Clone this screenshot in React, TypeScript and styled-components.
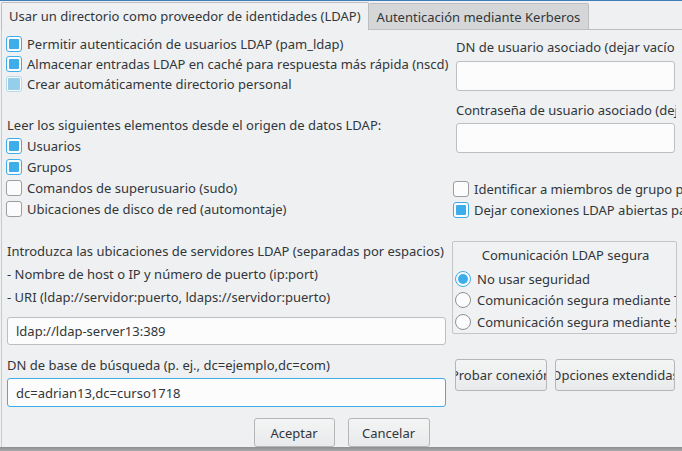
import React from "react";
import styled, { createGlobalStyle } from "styled-components";

const Global = createGlobalStyle`
  html, body { margin: 0; padding: 0; background: #eff0f1; }
  body { font-family: "Noto Sans", "DejaVu Sans", sans-serif; font-size: 13px; color: #31363b; }
  * { box-sizing: border-box; }
`;

const Window = styled.div`
  width: 682px;
  height: 451px;
  overflow: hidden;
  display: flex;
  flex-direction: column;
  background: #eff0f1;
  border-top: 1px solid #3f7fb8;
`;

const TabBar = styled.div`
  height: 29px;
  display: flex;
  align-items: flex-end;
  padding-left: 1px;
  flex-shrink: 0;
`;

const Tab = styled.div<{ $active?: boolean }>`
  height: ${(p) => (p.$active ? 28 : 27)}px;
  padding: 0 ${(p) => (p.$active ? 7 : 8)}px;
  display: flex;
  align-items: center;
  white-space: nowrap;
  border: 1px solid #bcbebf;
  border-bottom: ${(p) => (p.$active ? "none" : "1px solid #bcbebf")};
  border-left: ${(p) => (p.$active ? "1px solid #bcbebf" : "none")};
  border-radius: 2px 2px 0 0;
  background: ${(p) => (p.$active ? "#eff0f1" : "#d5d6d7")};
  padding-bottom: ${(p) => (p.$active ? 2 : 0)}px;
`;

const TabFill = styled.div`
  flex: 1;
  height: 1px;
  background: #bcbebf;
`;

const Pane = styled.div`
  flex: 1;
  display: flex;
  flex-direction: column;
  margin-left: 1px;
  border-left: 1px solid #c8cacb;
  padding-left: 4px;
  min-height: 0;
`;

const Section = styled.div<{ $h: number }>`
  display: grid;
  grid-template-columns: 440px 230px;
  column-gap: 6px;
  height: ${(p) => p.$h}px;
  align-items: start;
`;

const Column = styled.div<{ $top: number }>`
  display: flex;
  flex-direction: column;
  padding-top: ${(p) => p.$top}px;
  min-width: 0;
`;

const Label = styled.div<{ $mt?: number; $pl?: number; $w?: number }>`
  height: 20px;
  line-height: 20px;
  white-space: nowrap;
  overflow: ${(p) => (p.$w ? "hidden" : "visible")};
  width: ${(p) => (p.$w ? `${p.$w}px` : "auto")};
  margin-top: ${(p) => p.$mt ?? 0}px;
  padding-left: ${(p) => p.$pl ?? 1}px;
`;

const CheckRow = styled.div<{ $h: number; $mt?: number; $pl?: number }>`
  height: ${(p) => p.$h}px;
  display: flex;
  align-items: center;
  gap: 5px;
  white-space: nowrap;
  margin-top: ${(p) => p.$mt ?? 0}px;
  padding-left: ${(p) => p.$pl ?? 0}px;
`;

type CheckState = "on" | "off" | "soft";

const Box = styled.span<{ $state: CheckState }>`
  width: 16px;
  height: 16px;
  flex-shrink: 0;
  border-radius: 3px;
  border: 1px solid
    ${(p) => (p.$state === "on" ? "#3daee9" : p.$state === "soft" ? "#b6d8ea" : "#9b9d9f")};
  background: #fcfcfc;
  display: flex;
  align-items: center;
  justify-content: center;
  &::after {
    content: "";
    display: ${(p) => (p.$state === "off" ? "none" : "block")};
    width: ${(p) => (p.$state === "soft" ? 12 : 10)}px;
    height: ${(p) => (p.$state === "soft" ? 12 : 10)}px;
    border-radius: 1px;
    background: ${(p) => (p.$state === "soft" ? "#93cfea" : "#3daee9")};
  }
`;

const Input = styled.div<{ $h: number; $mt?: number; $ml?: number; $focus?: boolean; $w: number }>`
  height: ${(p) => p.$h}px;
  width: ${(p) => p.$w}px;
  margin-top: ${(p) => p.$mt ?? 0}px;
  margin-left: ${(p) => p.$ml ?? 0}px;
  border: 1px solid ${(p) => (p.$focus ? "#3daee9" : "#bdbfc0")};
  border-radius: 3px;
  background: #fcfcfc;
  display: flex;
  align-items: center;
  padding-left: 8px;
  white-space: nowrap;
`;

const GroupBox = styled.div`
  margin-top: 21px;
  width: 225px;
  height: 93px;
  border: 1px solid #c3c5c6;
  border-radius: 2px;
  background: #f0f1f2;
  overflow: hidden;
  display: flex;
  flex-direction: column;
  padding-left: 2px;
`;

const GroupTitle = styled.div`
  height: 26px;
  display: flex;
  align-items: center;
  justify-content: center;
  padding-top: 1px;
  white-space: nowrap;
`;

const RadioRow = styled.div`
  height: 22px;
  display: flex;
  align-items: center;
  gap: 6px;
  white-space: nowrap;
`;

const Radio = styled.span<{ $on?: boolean }>`
  width: 16px;
  height: 16px;
  flex-shrink: 0;
  border-radius: 50%;
  border: 1px solid ${(p) => (p.$on ? "#3daee9" : "#8f9193")};
  background: #fcfcfc;
  display: flex;
  align-items: center;
  justify-content: center;
  &::after {
    content: "";
    display: ${(p) => (p.$on ? "block" : "none")};
    width: 10px;
    height: 10px;
    border-radius: 50%;
    background: #3daee9;
  }
`;

const ButtonRow = styled.div<{ $mt: number; $pl?: number; $ml?: number; $gap: number; $center?: boolean }>`
  display: flex;
  gap: ${(p) => p.$gap}px;
  margin-top: ${(p) => p.$mt}px;
  margin-left: ${(p) => p.$ml ?? 0}px;
  padding-left: ${(p) => p.$pl ?? 0}px;
  justify-content: ${(p) => (p.$center ? "center" : "flex-start")};
`;

const Button = styled.div<{ $w: number; $h: number }>`
  width: ${(p) => p.$w}px;
  height: ${(p) => p.$h}px;
  flex-shrink: 0;
  border: 1px solid #b4b6b7;
  border-radius: 3px;
  background: linear-gradient(#f3f4f4, #e9eaeb);
  display: flex;
  align-items: center;
  justify-content: center;
  overflow: hidden;
  white-space: nowrap;
`;

const BottomBar = styled.div`
  height: 4px;
  flex-shrink: 0;
  background: linear-gradient(#8d8e8f, #a9aaab);
`;

const Check = ({
  state,
  children,
  h,
  mt,
  pl,
}: {
  state: CheckState;
  children: React.ReactNode;
  h: number;
  mt?: number;
  pl?: number;
}) => (
  <CheckRow $h={h} $mt={mt} $pl={pl}>
    <Box $state={state} />
    <span>{children}</span>
  </CheckRow>
);

export default function App() {
  return (
    <>
      <Global />
      <Window>
        <TabBar>
          <Tab $active>Usar un directorio como proveedor de identidades (LDAP)</Tab>
          <Tab>Autenticación mediante Kerberos</Tab>
          <TabFill />
        </TabBar>
        <Pane>
          <Section $h={190}>
            <Column $top={4}>
              <Check state="on" h={20}>Permitir autenticación de usuarios LDAP (pam_ldap)</Check>
              <Check state="on" h={20}>Almacenar entradas LDAP en caché para respuesta más rápida (nscd)</Check>
              <Check state="soft" h={20}>Crear automáticamente directorio personal</Check>
              <Label $mt={21}>Leer los siguientes elementos desde el origen de datos LDAP:</Label>
              <Check state="on" h={21}>Usuarios</Check>
              <Check state="on" h={21}>Grupos</Check>
              <Check state="off" h={21}>Comandos de superusuario (sudo)</Check>
              <Check state="off" h={21}>Ubicaciones de disco de red (automontaje)</Check>
            </Column>
            <Column $top={7}>
              <Label $pl={4} $w={224}>DN de usuario asociado (dejar vacío para anónimo)</Label>
              <Input $h={30} $mt={4} $ml={4} $w={219} />
              <Label $pl={4} $mt={9} $w={224}>Contraseña de usuario asociado (dejar vacío para anónimo)</Label>
              <Input $h={30} $mt={3} $ml={4} $w={219} />
              <Check state="off" h={21} mt={25} pl={1}>Identificar a miembros de grupo por DN</Check>
              <Check state="on" h={21} pl={1}>Dejar conexiones LDAP abiertas para su reutilización</Check>
            </Column>
          </Section>
          <Section $h={187}>
            <Column $top={21}>
              <Label>Introduzca las ubicaciones de servidores LDAP (separadas por espacios)</Label>
              <Label $mt={3}>- Nombre de host o IP y número de puerto (ip:port)</Label>
              <Label $mt={3}>- URI (ldap://servidor:puerto, ldaps://servidor:puerto)</Label>
              <Input $h={28} $mt={10} $ml={1} $w={439}>ldap://ldap-server13:389</Input>
              <Label $mt={10}>DN de base de búsqueda (p. ej., dc=ejemplo,dc=com)</Label>
              <Input $h={29} $mt={3} $ml={1} $w={439} $focus>dc=adrian13,dc=curso1718</Input>
            </Column>
            <Column $top={0}>
              <GroupBox>
                <GroupTitle>Comunicación LDAP segura</GroupTitle>
                <RadioRow>
                  <Radio $on />
                  <span>No usar seguridad</span>
                </RadioRow>
                <RadioRow>
                  <Radio />
                  <span>Comunicación segura mediante TLS</span>
                </RadioRow>
                <RadioRow>
                  <Radio />
                  <span>Comunicación segura mediante SSL</span>
                </RadioRow>
              </GroupBox>
              <ButtonRow $mt={25} $pl={3} $gap={8}>
                <Button $w={92} $h={32}>Probar conexión</Button>
                <Button $w={120} $h={32}>Opciones extendidas</Button>
              </ButtonRow>
            </Column>
          </Section>
          <ButtonRow $mt={11} $ml={-5} $gap={13} $center>
            <Button $w={81} $h={29}>Aceptar</Button>
            <Button $w={82} $h={29}>Cancelar</Button>
          </ButtonRow>
        </Pane>
        <BottomBar />
      </Window>
    </>
  );
}
